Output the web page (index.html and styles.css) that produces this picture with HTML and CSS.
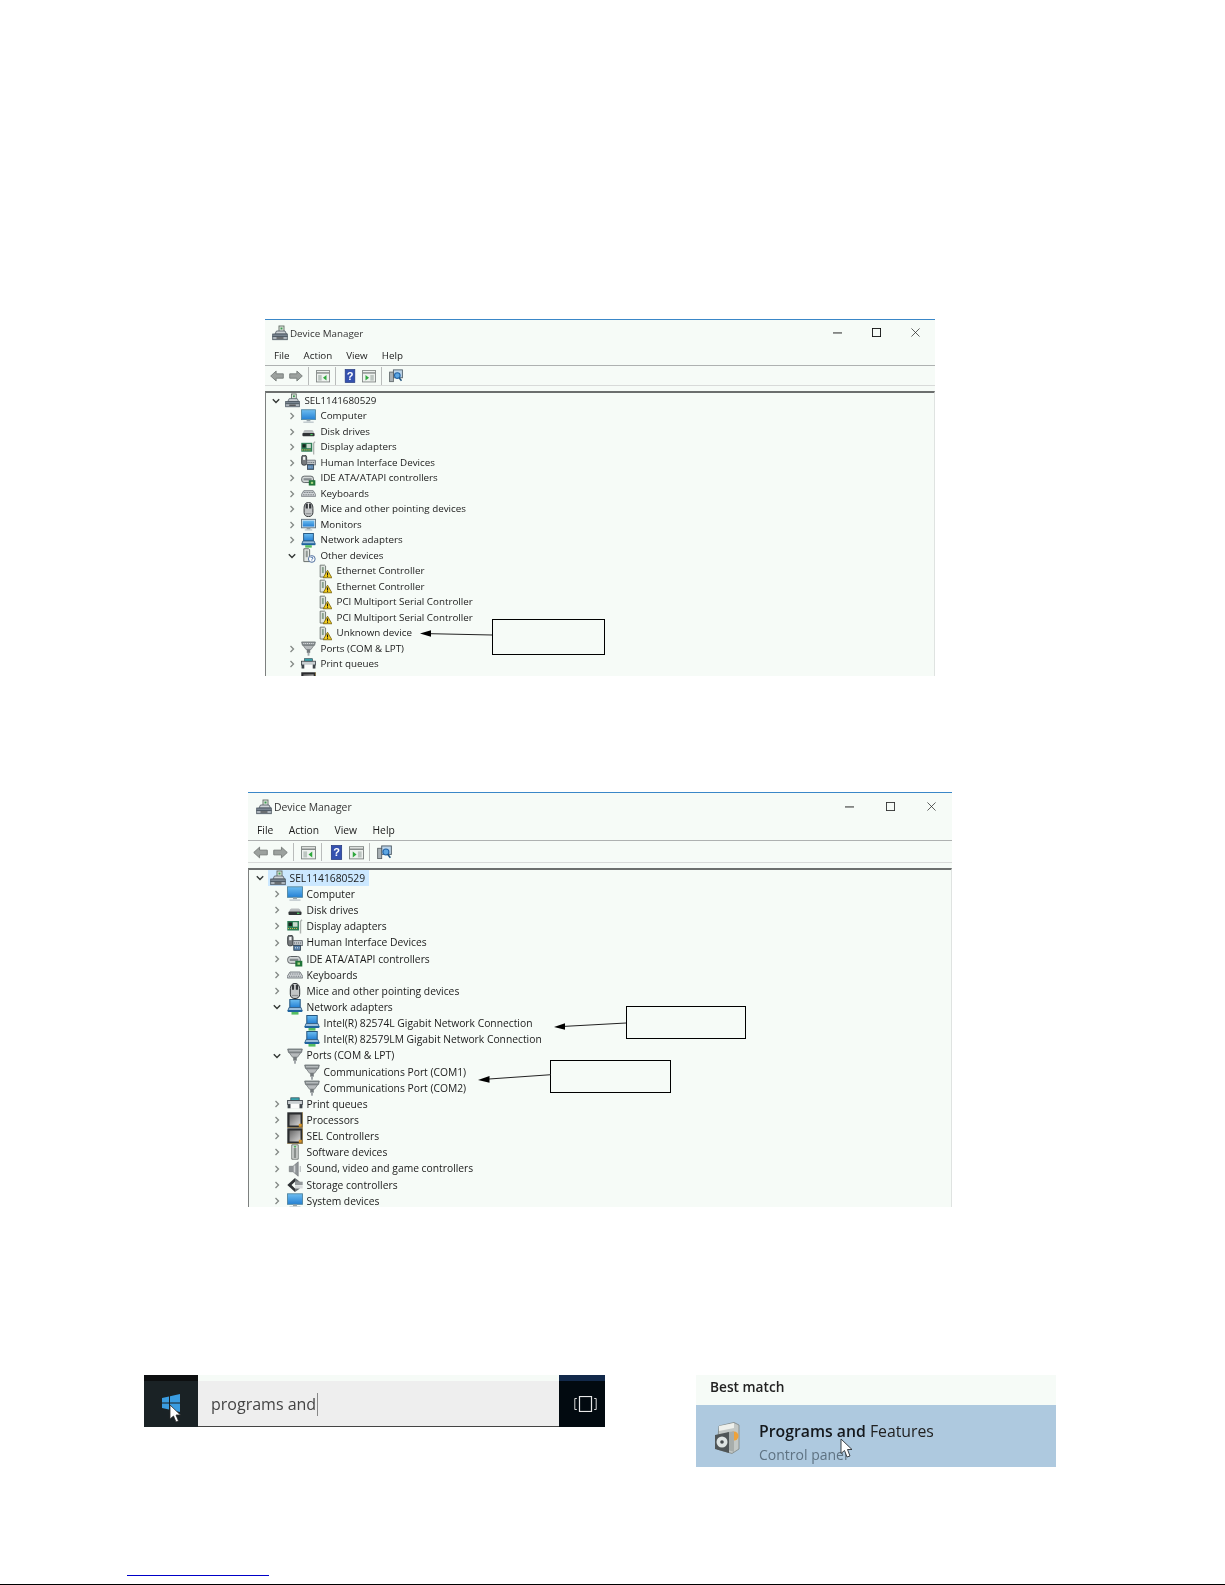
FILE: index.html
```html
<!DOCTYPE html>
<html lang="en">
<head>
<meta charset="utf-8">
<title>Device Manager</title>
<link rel="stylesheet" href="styles.css">
</head>
<body>
<svg class="defs" width="0" height="0" aria-hidden="true">
  <defs>
    <linearGradient id="gb" x1="0" y1="0" x2="0" y2="1"><stop offset="0" stop-color="#6dbdf0"/><stop offset="1" stop-color="#2480d4"/></linearGradient>
    <linearGradient id="gg" x1="0" y1="0" x2="1" y2="1"><stop offset="0" stop-color="#666"/><stop offset="1" stop-color="#d8d8d8"/></linearGradient>
    <symbol id="root" viewBox="0 0 16 16"><rect x="7" y="1" width="5" height="6" fill="#e3e8e3" stroke="#5d6a60" stroke-width=".9"/><rect x="8.500" y="2.500" width="2" height="2" fill="#3c9a50"/><path d="M3 9 4.500 6h8.500l1.500 3z" fill="#ced3d7" stroke="#5f6870" stroke-width=".9"/><rect x=".7" y="9" width="14.600" height="2.500" fill="#7a8691" stroke="#46525c" stroke-width=".8"/><rect x=".7" y="11.500" width="14.600" height="3.200" fill="#aeb6bd" stroke="#46525c" stroke-width=".8"/><path d="M4.500 13h7" stroke="#333" stroke-width="1.100"/></symbol>
    <symbol id="pc" viewBox="0 0 16 16"><rect x=".5" y=".8" width="15" height="10.500" fill="url(#gb)" stroke="#50859f" stroke-width=".9"/><rect x="6" y="11.500" width="4" height="1.700" fill="#98a4aa"/><rect x="2.500" y="13.400" width="11" height="1.400" fill="#bcc5ca"/></symbol>
    <symbol id="disk" viewBox="0 0 16 16"><path d="M2.800 8C3 7 4 6.500 5 6.500h6c1 0 2 .5 2.300 1.500L14 9.800H2z" fill="#b8bcbd"/><rect x="1.500" y="9.500" width="13" height="3.500" rx=".9" fill="#303436"/><rect x="10" y="10.700" width="2.400" height="1.200" fill="#4fd464"/></symbol>
    <symbol id="gpu" viewBox="0 0 16 16"><rect x=".3" y="3" width="11.700" height="9.500" fill="#2f7d56"/><rect x="1.500" y="4.500" width="3.500" height="3.500" fill="#18261f"/><rect x="6" y="4.200" width="4.500" height="4.500" fill="#c8d9cc"/><path d="M1 10.500h10" stroke="#d2b84e" stroke-width="1.200" stroke-dasharray="1 1"/><path d="M13.500 15.500V3.500L15 1.800" fill="none" stroke="#aeb3b0" stroke-width="1.400"/></symbol>
    <symbol id="hid" viewBox="0 0 16 16"><rect x=".7" y=".3" width="5.300" height="10.500" rx="2" fill="#777b7e" stroke="#2f3438" stroke-width=".9"/><rect x="2.200" y="2" width="2.300" height="3.200" fill="#f2f4f4"/><path d="M6 5.500h9.300l.5 5H6z" fill="#bfc4c8" stroke="#555b61" stroke-width=".8"/><path d="M7 8h7.500" stroke="#5f656b" stroke-width="1.100" stroke-dasharray="1 1"/><rect x="6.800" y="10.300" width="6.700" height="5" fill="#547fa9" stroke="#2c3a48" stroke-width=".8"/><path d="M8 12.800h4.500" stroke="#dfe8f0" stroke-dasharray="1 1"/></symbol>
    <symbol id="ide" viewBox="0 0 16 16"><rect x=".7" y="5.500" width="12.600" height="6.800" rx="2.700" fill="#d4d8d8" stroke="#5a6063" stroke-width="1"/><rect x="2.700" y="7.700" width="8.600" height="2.300" fill="#858c8f"/><rect x="8.300" y="9.800" width="7" height="5.700" fill="#1f7438"/><rect x="10.500" y="11.500" width="2.500" height="2.200" fill="#a9d581"/></symbol>
    <symbol id="kbd" viewBox="0 0 16 16"><path d="M3 5h10l2.700 4.300v1.700H.3V9.300z" fill="#d0d4d7" stroke="#70767b" stroke-width=".9"/><path d="M3 7h10M2 9.300h12" stroke="#6f757a" stroke-width="1.100" stroke-dasharray="1 .8"/></symbol>
    <symbol id="mouse" viewBox="0 0 16 16"><path d="M8 .4C5 .4 3.300 2.600 3.300 7v4.200c0 2.800 2 4.400 4.700 4.400s4.700-1.600 4.700-4.400V7C12.700 2.600 11 .4 8 .4z" fill="#c2c5c6" stroke="#2b2e31" stroke-width="1"/><path d="M5 1.800h2.400v5H5zM8.600 1.800H11v5H8.600z" fill="#34383b"/><path d="M7.900 1v6" stroke="#eceeee" stroke-width=".9"/><path d="M5 12.500h6" stroke="#8d9092" stroke-width="1.200"/></symbol>
    <symbol id="mon" viewBox="0 0 16 16"><rect x=".5" y="2.500" width="15" height="9" fill="#dfe7ec" stroke="#5f7482" stroke-width="1"/><rect x="1.800" y="3.800" width="12.400" height="6.400" fill="url(#gb)"/><rect x="6" y="11.500" width="4" height="1.700" fill="#8e9aa1"/><rect x="4" y="13.200" width="8" height="1.200" fill="#b8c2c8"/></symbol>
    <symbol id="net" viewBox="0 0 16 16"><rect x="2.800" y=".5" width="10.400" height="8" fill="url(#gb)" stroke="#24557f" stroke-width="1"/><path d="M2 8.500h12l1.200 3.500H.8z" fill="#9dbedb" stroke="#30608a" stroke-width=".9"/><rect x=".8" y="11" width="14.400" height="2" fill="#1f649f"/><rect x="4.500" y="13" width="7" height="2.600" fill="#55bd62"/></symbol>
    <symbol id="other" viewBox="0 0 16 16"><path d="M3 .8h5.200l1 1V14.500H3z" fill="#e3e7e4" stroke="#616864" stroke-width="1"/><rect x="5" y="2.800" width="2.200" height="7" fill="#8f9792"/><circle cx="11.500" cy="11.700" r="3.600" fill="#fff" stroke="#48699a" stroke-width="1"/><path d="M10.300 10.600c.3-1.300 2.400-1.100 2.400.2 0 .9-1.200.9-1.200 1.700M11.500 13.400v.7" fill="none" stroke="#1f5596" stroke-width=".9"/></symbol>
    <symbol id="warn" viewBox="-1.500 0 17.500 16"><path d="M2.200.6h5.300l1 1V14.500H2.200z" fill="#dfe4e0" stroke="#656c68" stroke-width="1"/><rect x="4.200" y="2.800" width="2.200" height="7" fill="#87a08c"/><path d="M10.800 6.500 15.900 15.300H5.700z" fill="#f2cb1c" stroke="#6c5908" stroke-width=".9"/><path d="M10.800 9.300v3M10.800 13v1.200" stroke="#111" stroke-width="1.200"/></symbol>
    <symbol id="port" viewBox="0 0 16 16"><path d="M.7 1h14.600l-.8 3.500H1.500z" fill="#8e9497" stroke="#666c6f" stroke-width=".8"/><path d="M2.300 4.800h11.400l-3.200 4.400h-5z" fill="#b6babc" stroke="#71777a" stroke-width=".8"/><rect x="6.200" y="9" width="3.600" height="3.700" fill="#73797c"/><rect x="7" y="12.500" width="2" height="3.200" fill="#a3a8ab"/><path d="M2.500 2.700h11" stroke="#eef0f1" stroke-dasharray="1 1"/></symbol>
    <symbol id="prn" viewBox="0 0 16 16"><rect x="3.800" y="1.800" width="8.400" height="3" fill="#38a2ac" stroke="#2c4650" stroke-width=".7"/><rect x=".6" y="4.500" width="14.800" height="4" fill="#c8cdd0" stroke="#3e454a" stroke-width=".9"/><rect x=".6" y="8.500" width="14.800" height="3.800" fill="#3e454a"/><rect x="3.500" y="7.800" width="9" height="5" fill="#fbfcfc"/></symbol>
    <symbol id="cpu" viewBox="0 0 16 16"><rect x=".3" y=".3" width="15.400" height="15.400" fill="#2a2c2e"/><rect x="2.500" y="2.500" width="11" height="11" fill="url(#gg)"/><rect x="11.800" y="11.800" width="3" height="3" fill="#d8962a"/><path d="M.5 15.500h15M15.500.5v15" stroke="#c4983a" stroke-width=".8" stroke-dasharray="1 1"/></symbol>
    <symbol id="soft" viewBox="0 0 16 16"><path d="M4.800.8h6.400v14.400H4.800z" fill="#e3e7e4" stroke="#676d6a" stroke-width=".9"/><rect x="6.600" y="4" width="2.800" height="10" fill="#8a908d"/><rect x="6.800" y="1.800" width="2.400" height="1.700" fill="#4fb05e"/></symbol>
    <symbol id="snd" viewBox="0 0 16 16"><path d="M2.300 5.300H6L11.200.8v14.400L6 10.700H2.300z" fill="#8f9497" stroke="#75797c" stroke-width=".7"/><path d="M7.500 4.500v7" stroke="#d2d5d7" stroke-width="1.600"/><path d="M13.300 5v6" stroke="#b7bbbd" stroke-width="1.100"/></symbol>
    <symbol id="stor" viewBox="0 0 16 16"><path d="M8 1 .3 8 8 15v-3.500L4.500 8 8 4.700z" fill="#2f3235"/><path d="M8 4.700h7.700v3.300H8z" fill="#93989b"/><path d="M8 8.300h7.700V11.500H8z" fill="#d8dbdc"/><path d="M8 1l5 3.700H8zM8 15l5-3.500H8z" fill="#696e72"/></symbol>
    <symbol id="more" viewBox="0 0 8 8"><path d="M2.500 1 5.500 4 2.500 7" fill="none" stroke="#838885" stroke-width="1.300"/></symbol>
    <symbol id="open" viewBox="0 0 8 8"><path d="M.8 2.300 4 5.500 7.200 2.300" fill="none" stroke="#333735" stroke-width="1.400"/></symbol>
    <symbol id="back" viewBox="0 0 16 16"><path d="M.8 8 7 2.300v3.200h8.200v5H7v3.200z" fill="#9ca19e" stroke="#757b78" stroke-width="1"/></symbol>
    <symbol id="fwd" viewBox="0 0 16 16"><path d="M15.200 8 9 2.300v3.200H.8v5H9v3.200z" fill="#9ca19e" stroke="#757b78" stroke-width="1"/></symbol>
    <symbol id="pane-l" viewBox="0 0 16 16"><rect x=".5" y="1.800" width="15" height="13" fill="#eef1ef" stroke="#7f8583" stroke-width="1"/><path d="M1 4.500h14" stroke="#858b89" stroke-width="1.600"/><path d="M2.500 6.800h4v6.500h-4z" fill="#bcc5c0"/><path d="M12 6.800 8 10l4 3.200z" fill="#2ea83c"/></symbol>
    <symbol id="pane-r" viewBox="0 0 16 16"><rect x=".5" y="1.800" width="15" height="13" fill="#eef1ef" stroke="#7f8583" stroke-width="1"/><path d="M1 4.500h14" stroke="#858b89" stroke-width="1.600"/><path d="M9.500 6.800h4v6.500h-4z" fill="#bcc5c0"/><path d="M4 6.800 8 10l-4 3.200z" fill="#2ea83c"/></symbol>
    <symbol id="help" viewBox="0 0 14 16"><rect x="1.500" y=".6" width="11" height="14.800" fill="#3552b0" stroke="#25397e" stroke-width=".8"/></symbol>
    <symbol id="scan" viewBox="0 0 16 16"><rect x="5" y="1" width="10.300" height="9" fill="#bcd4e8" stroke="#4f5d68" stroke-width="1"/><rect x=".7" y="3.500" width="4.300" height="11" fill="#aab2b6" stroke="#565e62" stroke-width=".9"/><circle cx="9.500" cy="7.500" r="3.200" fill="#5ca6e2" stroke="#1f63a8" stroke-width="1.200"/><path d="m11.500 10 2.800 3.500" stroke="#20547f" stroke-width="1.700"/></symbol>
  </defs>
</svg>

<main class="page">
  <section class="win win-a">
    <header class="titlebar">
      <svg class="title-icon"><use href="#root"/></svg>
      <span class="title">Device Manager</span>
      <div class="controls">
        <span class="ctl"><svg viewBox="0 0 10 10"><path d="M0 5.500h10" stroke="#111" fill="none"/></svg></span>
        <span class="ctl"><svg viewBox="0 0 10 10"><rect x=".5" y=".5" width="9" height="9" stroke="#111" fill="none"/></svg></span>
        <span class="ctl"><svg viewBox="0 0 10 10"><path d="M.5.500l9 9M9.500.5l-9 9" stroke="#222" fill="none" stroke-width=".8"/></svg></span>
      </div>
    </header>
    <nav class="menubar"><span>File</span><span>Action</span><span>View</span><span>Help</span></nav>
    <div class="toolbar">
      <svg class="tool"><use href="#back"/></svg><svg class="tool"><use href="#fwd"/></svg><i class="tsep"></i>
      <svg class="tool"><use href="#pane-l"/></svg><i class="tsep"></i>
      <span class="tool helpbtn"><svg><use href="#help"/></svg><b>?</b></span>
      <svg class="tool"><use href="#pane-r"/></svg><i class="tsep"></i>
      <svg class="tool"><use href="#scan"/></svg>
    </div>
    <div class="tree">
      <div class="row l0"><svg class="tw"><use href="#open"/></svg><span class="node"><svg class="ic"><use href="#root"/></svg><span>SEL1141680529</span></span></div>
      <div class="row l1"><svg class="tw"><use href="#more"/></svg><span class="node"><svg class="ic"><use href="#pc"/></svg><span>Computer</span></span></div>
      <div class="row l1"><svg class="tw"><use href="#more"/></svg><span class="node"><svg class="ic"><use href="#disk"/></svg><span>Disk drives</span></span></div>
      <div class="row l1"><svg class="tw"><use href="#more"/></svg><span class="node"><svg class="ic"><use href="#gpu"/></svg><span>Display adapters</span></span></div>
      <div class="row l1"><svg class="tw"><use href="#more"/></svg><span class="node"><svg class="ic"><use href="#hid"/></svg><span>Human Interface Devices</span></span></div>
      <div class="row l1"><svg class="tw"><use href="#more"/></svg><span class="node"><svg class="ic"><use href="#ide"/></svg><span>IDE ATA/ATAPI controllers</span></span></div>
      <div class="row l1"><svg class="tw"><use href="#more"/></svg><span class="node"><svg class="ic"><use href="#kbd"/></svg><span>Keyboards</span></span></div>
      <div class="row l1"><svg class="tw"><use href="#more"/></svg><span class="node"><svg class="ic"><use href="#mouse"/></svg><span>Mice and other pointing devices</span></span></div>
      <div class="row l1"><svg class="tw"><use href="#more"/></svg><span class="node"><svg class="ic"><use href="#mon"/></svg><span>Monitors</span></span></div>
      <div class="row l1"><svg class="tw"><use href="#more"/></svg><span class="node"><svg class="ic"><use href="#net"/></svg><span>Network adapters</span></span></div>
      <div class="row l1"><svg class="tw"><use href="#open"/></svg><span class="node"><svg class="ic"><use href="#other"/></svg><span>Other devices</span></span></div>
      <div class="row l2"><span class="tw"></span><span class="node"><svg class="ic"><use href="#warn"/></svg><span>Ethernet Controller</span></span></div>
      <div class="row l2"><span class="tw"></span><span class="node"><svg class="ic"><use href="#warn"/></svg><span>Ethernet Controller</span></span></div>
      <div class="row l2"><span class="tw"></span><span class="node"><svg class="ic"><use href="#warn"/></svg><span>PCI Multiport Serial Controller</span></span></div>
      <div class="row l2"><span class="tw"></span><span class="node"><svg class="ic"><use href="#warn"/></svg><span>PCI Multiport Serial Controller</span></span></div>
      <div class="row l2"><span class="tw"></span><span class="node"><svg class="ic"><use href="#warn"/></svg><span>Unknown device</span></span></div>
      <div class="row l1"><svg class="tw"><use href="#more"/></svg><span class="node"><svg class="ic"><use href="#port"/></svg><span>Ports (COM &amp; LPT)</span></span></div>
      <div class="row l1"><svg class="tw"><use href="#more"/></svg><span class="node"><svg class="ic"><use href="#prn"/></svg><span>Print queues</span></span></div>
      <div class="row l1"><svg class="tw"><use href="#more"/></svg><span class="node"><svg class="ic"><use href="#cpu"/></svg></span></div>
    </div>
    <svg class="overlay" viewBox="0 0 670 357">
      <rect x="227.500" y="300.500" width="112" height="35" fill="#f6fbf7" stroke="#000"/>
      <path d="M227 316 165 314.700" stroke="#222" stroke-width="1" fill="none"/>
      <path d="M155 314.500 166 311.200 166 317.800z" fill="#000"/>
    </svg>
  </section>

  <section class="win win-b">
    <header class="titlebar">
      <svg class="title-icon"><use href="#root"/></svg>
      <span class="title">Device Manager</span>
      <div class="controls">
        <span class="ctl"><svg viewBox="0 0 10 10"><path d="M0 5.500h10" stroke="#111" fill="none"/></svg></span>
        <span class="ctl"><svg viewBox="0 0 10 10"><rect x=".5" y=".5" width="9" height="9" stroke="#333" fill="none"/></svg></span>
        <span class="ctl"><svg viewBox="0 0 10 10"><path d="M.5.500l9 9M9.500.5l-9 9" stroke="#222" fill="none" stroke-width=".8"/></svg></span>
      </div>
    </header>
    <nav class="menubar"><span>File</span><span>Action</span><span>View</span><span>Help</span></nav>
    <div class="toolbar">
      <svg class="tool"><use href="#back"/></svg><svg class="tool"><use href="#fwd"/></svg><i class="tsep"></i>
      <svg class="tool"><use href="#pane-l"/></svg><i class="tsep"></i>
      <span class="tool helpbtn"><svg><use href="#help"/></svg><b>?</b></span>
      <svg class="tool"><use href="#pane-r"/></svg><i class="tsep"></i>
      <svg class="tool"><use href="#scan"/></svg>
    </div>
    <div class="tree">
      <div class="row l0"><svg class="tw"><use href="#open"/></svg><span class="node sel"><svg class="ic"><use href="#root"/></svg><span>SEL1141680529</span></span></div>
      <div class="row l1"><svg class="tw"><use href="#more"/></svg><span class="node"><svg class="ic"><use href="#pc"/></svg><span>Computer</span></span></div>
      <div class="row l1"><svg class="tw"><use href="#more"/></svg><span class="node"><svg class="ic"><use href="#disk"/></svg><span>Disk drives</span></span></div>
      <div class="row l1"><svg class="tw"><use href="#more"/></svg><span class="node"><svg class="ic"><use href="#gpu"/></svg><span>Display adapters</span></span></div>
      <div class="row l1"><svg class="tw"><use href="#more"/></svg><span class="node"><svg class="ic"><use href="#hid"/></svg><span>Human Interface Devices</span></span></div>
      <div class="row l1"><svg class="tw"><use href="#more"/></svg><span class="node"><svg class="ic"><use href="#ide"/></svg><span>IDE ATA/ATAPI controllers</span></span></div>
      <div class="row l1"><svg class="tw"><use href="#more"/></svg><span class="node"><svg class="ic"><use href="#kbd"/></svg><span>Keyboards</span></span></div>
      <div class="row l1"><svg class="tw"><use href="#more"/></svg><span class="node"><svg class="ic"><use href="#mouse"/></svg><span>Mice and other pointing devices</span></span></div>
      <div class="row l1"><svg class="tw"><use href="#open"/></svg><span class="node"><svg class="ic"><use href="#net"/></svg><span>Network adapters</span></span></div>
      <div class="row l2"><span class="tw"></span><span class="node"><svg class="ic"><use href="#net"/></svg><span>Intel(R) 82574L Gigabit Network Connection</span></span></div>
      <div class="row l2"><span class="tw"></span><span class="node"><svg class="ic"><use href="#net"/></svg><span>Intel(R) 82579LM Gigabit Network Connection</span></span></div>
      <div class="row l1"><svg class="tw"><use href="#open"/></svg><span class="node"><svg class="ic"><use href="#port"/></svg><span>Ports (COM &amp; LPT)</span></span></div>
      <div class="row l2"><span class="tw"></span><span class="node"><svg class="ic"><use href="#port"/></svg><span>Communications Port (COM1)</span></span></div>
      <div class="row l2"><span class="tw"></span><span class="node"><svg class="ic"><use href="#port"/></svg><span>Communications Port (COM2)</span></span></div>
      <div class="row l1"><svg class="tw"><use href="#more"/></svg><span class="node"><svg class="ic"><use href="#prn"/></svg><span>Print queues</span></span></div>
      <div class="row l1"><svg class="tw"><use href="#more"/></svg><span class="node"><svg class="ic"><use href="#cpu"/></svg><span>Processors</span></span></div>
      <div class="row l1"><svg class="tw"><use href="#more"/></svg><span class="node"><svg class="ic"><use href="#cpu"/></svg><span>SEL Controllers</span></span></div>
      <div class="row l1"><svg class="tw"><use href="#more"/></svg><span class="node"><svg class="ic"><use href="#soft"/></svg><span>Software devices</span></span></div>
      <div class="row l1"><svg class="tw"><use href="#more"/></svg><span class="node"><svg class="ic"><use href="#snd"/></svg><span>Sound, video and game controllers</span></span></div>
      <div class="row l1"><svg class="tw"><use href="#more"/></svg><span class="node"><svg class="ic"><use href="#stor"/></svg><span>Storage controllers</span></span></div>
      <div class="row l1"><svg class="tw"><use href="#more"/></svg><span class="node"><svg class="ic"><use href="#pc"/></svg><span>System devices</span></span></div>
    </div>
    <svg class="overlay" viewBox="0 0 704 415">
      <rect x="378.500" y="214.500" width="119" height="32" fill="#f6fbf7" stroke="#000"/>
      <path d="M378 231 316 234.400" stroke="#222" fill="none"/>
      <path d="M306 235 317 231.200 317 237.800z" fill="#000"/>
      <rect x="302.500" y="268.500" width="120" height="32" fill="#f6fbf7" stroke="#000"/>
      <path d="M303 282.700 241 287" stroke="#222" fill="none"/>
      <path d="M230 288 241.500 284 241.500 290.800z" fill="#000"/>
    </svg>
  </section>

  <section class="shots">
    <div class="searchbar">
      <div class="start">
        <svg class="winlogo" viewBox="0 0 18 18"><path d="M0 4 7 2.500V8.500H0zM8 2.300 18 0V8.500H8zM0 9.500h7V15.500L0 14zM8 9.500H18V18L8 15.700z" fill="#3a9ce0"/></svg>
        <svg class="cursor cursor-start" viewBox="0 0 12 19"><path d="M1 1V15L4.500 12 7 18 9.500 17 7 11H11.500z" fill="#fff" stroke="#2a2a2a" stroke-width=".8"/></svg>
      </div>
      <div class="input"><span class="typed">programs and</span></div>
      <div class="taskview">
        <svg viewBox="0 0 23 16"><rect x="5.500" y=".5" width="12" height="15" fill="none" stroke="#e8e8e8" stroke-width="1.200"/><path d="M2.800 2.500H.8v11h2M20.200 2.500h2v11h-2" fill="none" stroke="#d8d8d8" stroke-width="1"/></svg>
      </div>
    </div>
    <div class="results">
      <div class="results-head">Best match</div>
      <div class="result">
        <svg class="prog-icon" viewBox="0 0 28 32"><path d="M5 4 20 .5 25 3V27L18 31.500 3 27z" fill="#c3c8c6" stroke="#7d8583" stroke-width=".8"/><path d="M5 4 20 1V6L5 9z" fill="#eef0ec"/><circle cx="20" cy="14" r="4.500" fill="#eea23a"/><path d="M13 10 20 9.500V30L14 28z" fill="#a7adab"/><path d="M1 13 15 10V31L1 27z" fill="#4f5557"/><circle cx="8" cy="20" r="5.500" fill="#dde3e2"/><circle cx="8" cy="20" r="1.800" fill="#44494c"/></svg>
        <div class="result-text">
          <div class="result-name"><b>Programs and</b> Features</div>
          <div class="result-sub">Control panel</div>
        </div>
        <svg class="cursor cursor-result" viewBox="0 0 13 20"><path d="M1 1V15.500L4.500 12.500 7 19 10 18 7.500 11.500H12z" fill="#fff" stroke="#2a2f33" stroke-width=".9"/></svg>
      </div>
    </div>
  </section>

  <footer class="foot"><div class="footnote-rule"></div></footer>
</main>
</body>
</html>
```
FILE: styles.css
```css
* { box-sizing: border-box; }
html, body { margin: 0; padding: 0; background: #fff; }
body { font-family: "Open Sans", "Liberation Sans", sans-serif; color: #1a1a1a; }
.defs { position: absolute; }
.page { width: 1225px; height: 1585px; overflow: hidden; }

.win {
  position: relative;
  display: flex;
  flex-direction: column;
  overflow: hidden;
  background: #f6fbf7;
  border-top: 1px solid #3a87c8;
}
.win-a { --row: 15.5px; --icon: 15px; --indent: 16px; --tool: 14px; width: 670px; height: 357px; margin: 319px 0 0 265px; font-size: 9.800px; }
.win-b { --row: 16.15px; --icon: 16px; --indent: 17px; --tool: 15px; width: 704px; height: 415px; margin: 116px 0 0 248px; font-size: 10.300px; }

.titlebar { display: flex; align-items: center; flex: none; }
.win-a .titlebar { height: 26px; padding: 0 15px 0 7px; }
.win-b .titlebar { height: 27px; padding: 0 16px 0 8px; }
.title-icon { width: 16px; height: 16px; margin-right: 2px; }
.title { color: #333; filter: blur(.25px); }
.win-a .title { font-size: 9.800px; }
.win-b .title { font-size: 10.400px; }
.controls { display: flex; margin-left: auto; }
.win-a .controls { gap: 30px; }
.win-b .controls { gap: 32px; }
.ctl { display: flex; width: 9px; height: 9px; margin-top: -1px; }
.ctl svg { width: 9px; height: 9px; }

.menubar { display: flex; flex: none; align-items: center; padding-bottom: 1px; border-bottom: 1px solid #aeb1b1; }
.menubar span { filter: blur(.25px); }
.win-a .menubar { height: 20px; padding-left: 9px; gap: 14px; }
.win-b .menubar { height: 21px; padding-left: 9px; gap: 15.500px; }

.toolbar { display: flex; flex: none; align-items: center; gap: 5px; padding-left: 5px; border-bottom: 1px solid #d8dad9; }
.win-a .toolbar { height: 20px; margin-bottom: 4.500px; }
.win-b .toolbar { height: 22px; padding-top: 1px; margin-bottom: 5px; }
.tool { width: var(--tool); height: var(--tool); flex: none; filter: blur(.25px); }
.tsep { width: 1px; height: 18px; margin-right: 2px; background: #b9bcbb; }
.helpbtn { position: relative; display: flex; align-items: center; justify-content: center; }
.helpbtn svg { width: 100%; height: 100%; }
.helpbtn b { position: absolute; inset: 0; text-align: center; color: #fff; font: 700 11px/14px "Liberation Sans", sans-serif; }

.tree { flex: 1; min-height: 0; overflow: hidden; border-top: 2px solid #6c6f6e; border-left: 1.500px solid #7d807f; border-right: 1px solid #dfe3e1; }
.win-a .tree { padding-top: .5px; }
.row { display: flex; align-items: center; height: var(--row); line-height: 1; white-space: nowrap; }
.win-a .row { padding-left: 5.500px; }
.win-b .row { padding-left: 6.500px; }
.win-a .l1 { padding-left: calc(5.500px + var(--indent)); }
.win-a .l2 { padding-left: calc(5.500px + 2 * var(--indent)); }
.win-b .l1 { padding-left: calc(6.500px + var(--indent)); }
.win-b .l2 { padding-left: calc(6.500px + 2 * var(--indent)); }
.tw { width: 8px; height: 8px; flex: none; }
.node { display: flex; align-items: center; gap: 4.500px; height: 100%; padding-right: 4px; filter: blur(.25px); }
.win-a .tw { margin-right: 5.500px; }
.win-b .tw { margin-right: 4px; }
.win-b .node { padding-left: 2px; gap: 4px; }
.ic { width: var(--icon); height: var(--icon); flex: none; }
.sel { background: #cce8ff; }

.overlay { position: absolute; inset: -1px 0 0 0; width: 100%; height: calc(100% + 1px); pointer-events: none; }

.shots { display: flex; align-items: flex-start; gap: 91px; margin: 168px 0 0 144px; }
.searchbar { display: flex; width: 461px; height: 52px; }
.start { position: relative; width: 54px; flex: none; background: #1a2225; border-top: 6px solid #0d0f10; }
.winlogo { position: absolute; left: 18px; top: 13px; width: 18px; height: 18px; }
.cursor { position: absolute; }
.cursor-start { left: 25px; top: 23px; width: 12px; height: 19px; }
.input { width: 361px; flex: none; display: flex; align-items: center; padding: 1px 0 0 13px; background: #eeeeee; border-top: 6px solid #f6fbf7; border-bottom: 1px solid #444; }
.typed { font-size: 16px; color: #444; line-height: 23px; padding-right: 1px; border-right: 1px solid #888; filter: blur(.3px); }
.taskview { flex: 1; display: flex; align-items: center; justify-content: center; padding-left: 6px; background: #020a10; border-top: 6px solid #12294a; }
.taskview svg { width: 23px; height: 16px; }

.results { width: 360px; }
.results-head { height: 30px; padding-left: 14px; background: #f6fbf7; font-size: 13.700px; font-weight: 600; line-height: 24px; color: #222; filter: blur(.25px); }
.result { position: relative; display: flex; height: 62px; padding: 17px 0 0 18px; background: #aec9df; }
.prog-icon { width: 28px; height: 32px; margin-right: 17px; flex: none; }
.result-text { margin-top: -2px; filter: blur(.25px); }
.result-name { font-size: 15.800px; line-height: 22px; color: #222; }
.result-name b { font-weight: 600; color: #14181c; }
.result-sub { font-size: 14px; line-height: 25px; color: #5e7282; }
.cursor-result { left: 144px; top: 33px; width: 13px; height: 20px; }

.foot { margin-top: 108px; }
.footnote-rule { width: 142px; height: 1px; margin-left: 127px; background: #0000c8; }
.foot::after { content: ""; display: block; height: 1px; margin-top: 8px; background: #000; }
```
